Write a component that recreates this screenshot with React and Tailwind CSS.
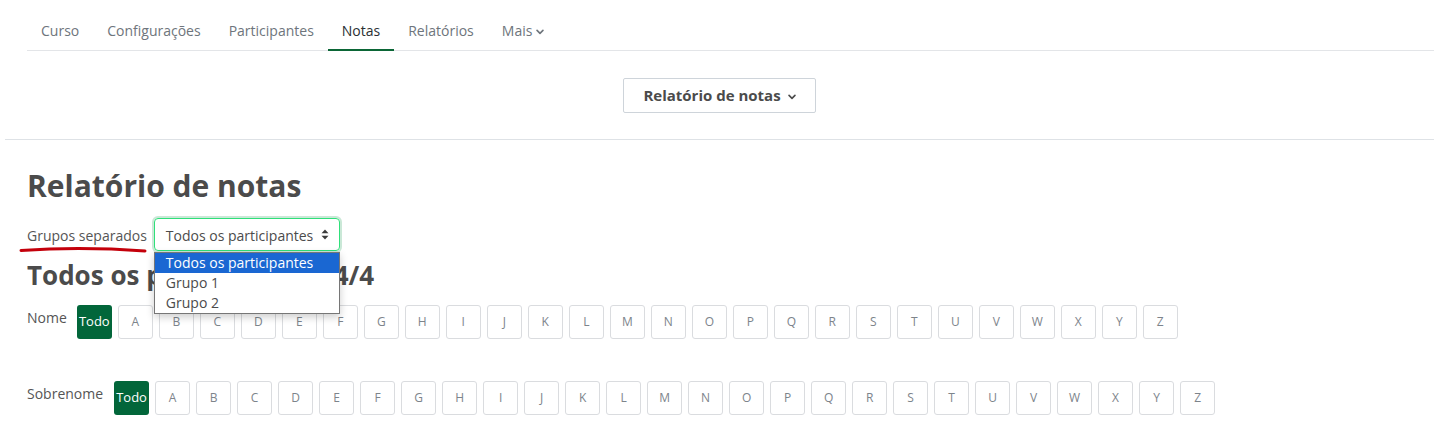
import React from "react";

const letters = "ABCDEFGHIJKLMNOPQRSTUVWXYZ".split("");

function Chevron({ className }) {
  return (
    <svg className={className} width="9" height="6" viewBox="0 0 9 6" fill="none">
      <path d="M1.2 1.2 L4.5 4.5 L7.8 1.2" stroke="currentColor" strokeWidth="1.8" strokeLinecap="round" strokeLinejoin="round" />
    </svg>
  );
}

function LetterRow({ label, gap }) {
  return (
    <div className="flex items-start">
      <span className={"mt-[3px] text-[14px] leading-[20px] text-[#555] " + gap}>{label}</span>
      <div className="flex gap-[6px]">
        <div className="w-[35px] h-[34px] rounded-[3px] bg-[#02663a] text-white text-[13px] flex items-center justify-center">
          Todo
        </div>
        {letters.map((l) => (
          <div
            key={l}
            className="w-[35px] h-[34px] rounded-[3px] border border-[#dadcdf] text-[12px] text-[#7d848b] flex items-center justify-center"
          >
            {l}
          </div>
        ))}
      </div>
    </div>
  );
}

export default function App() {
  const tabs = ["Curso", "Configurações", "Participantes", "Notas", "Relatórios"];
  return (
    <div className="w-[1434px] h-[438px] overflow-hidden bg-white font-['Open_Sans',sans-serif] text-[#4b4b4b]">
      <div className="ml-[5px] border-b border-[#dee2e6] pb-[26px]">
        <nav className="ml-[22px] mt-[9px] flex border-b border-[#e3e5e8]">
          {tabs.map((t) => (
            <div
              key={t}
              className={
                "-mb-px px-[14px] pt-[12px] pb-[8px] text-[14px] leading-[20px] border-b-2 " +
                (t === "Notas" ? "border-[#0b6636] text-[#2b2f33]" : "border-transparent text-[#6e757c]")
              }
            >
              {t}
            </div>
          ))}
          <div className="-mb-px px-[14px] pt-[12px] pb-[8px] text-[14px] leading-[20px] border-b-2 border-transparent text-[#6e757c] flex items-start gap-[4px]">
            Mais
            <Chevron className="mt-[8px] w-[8px] h-[6px]" />
          </div>
        </nav>
        <div className="flex justify-center mt-[27px]">
          <div className="h-[35px] w-[193px] border border-[#ced4da] rounded-[2px] flex items-center justify-center gap-[7px] text-[15px] font-bold text-[#4b4b4b]">
            Relatório de notas
            <Chevron className="w-[8px] h-[6px] mt-[2px]" />
          </div>
        </div>
      </div>

      <div className="px-[27px]">
        <h2 className="mt-[28px] text-[30px] leading-[36px] font-bold text-[#4b4b4b]">Relatório de notas</h2>

        <div className="mt-[14px] flex items-center h-[33px] relative">
          <span className="text-[14px] leading-[20px] text-[#555] pt-[3px]">Grupos separados</span>
          <svg className="absolute left-[-8px] top-[28px]" width="130" height="8" viewBox="0 0 130 8" fill="none">
            <path d="M2 4.5 Q 62 0.5 126 5" stroke="#c4000b" strokeWidth="3" strokeLinecap="round" />
          </svg>
          <div className="relative ml-[7px]">
            <div className="h-[33px] w-[186px] rounded-[4px] border border-[#2fe07a] shadow-[0_0_0_2px_rgba(150,210,175,0.5)] flex items-center pl-[11px] pr-[10px] text-[14px] text-[#4b4b4b]">
              <span className="pt-[2px]">Todos os participantes</span>
              <svg className="ml-auto" width="8" height="11" viewBox="0 0 8 11">
                <path d="M4 0.5 L7.5 4.3 L0.5 4.3 Z" fill="#3a3a3a" />
                <path d="M4 10.5 L7.5 6.7 L0.5 6.7 Z" fill="#3a3a3a" />
              </svg>
            </div>
            <div className="absolute left-0 top-[34px] w-[186px] z-10 bg-white border border-[#767676] shadow-[0_3px_8px_rgba(0,0,0,0.2)] text-[14px] leading-[20px] text-[#4b4b4b]">
              <div className="bg-[#1a67d2] text-white pl-[11px] h-[20px]">Todos os participantes</div>
              <div className="pl-[11px] h-[20px]">Grupo 1</div>
              <div className="pl-[11px] h-[20px]">Grupo 2</div>
            </div>
          </div>
        </div>

        <h3 className="mt-[9px] text-[26px] leading-[31px] font-bold text-[#4b4b4b]">Todos os participantes: 4/4</h3>

        <div className="mt-[14px]">
          <LetterRow label="Nome" gap="mr-[10px]" />
        </div>
        <div className="mt-[42px]">
          <LetterRow label="Sobrenome" gap="mr-[11px]" />
        </div>
      </div>
    </div>
  );
}
